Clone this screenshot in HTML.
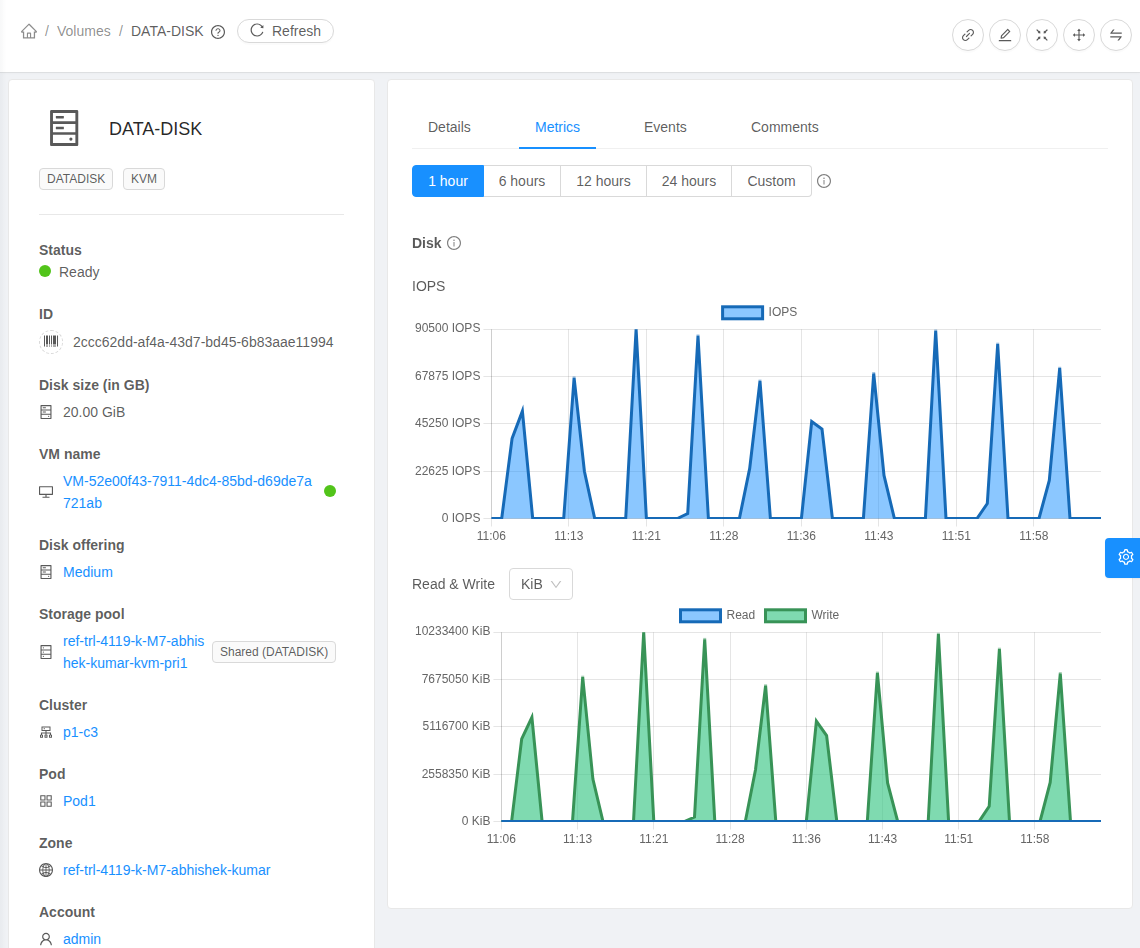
<!DOCTYPE html>
<html lang="en">
<head>
<meta charset="utf-8">
<title>DATA-DISK - Volumes</title>
<style>
*{box-sizing:border-box;}
html,body{margin:0;padding:0;}
body{width:1140px;height:948px;overflow:hidden;background:#f0f2f5;font-family:"Liberation Sans",Arial,Helvetica,sans-serif;font-size:14px;line-height:22px;color:rgba(0,0,0,.65);position:relative;}
a{color:#1890ff;text-decoration:none;}
svg{display:block;}
.abs{position:absolute;}
#hdr{position:absolute;left:0;top:0;width:1140px;height:72px;background:#fff;box-shadow:0 1px 0 rgba(0,0,0,.06),0 1px 3px rgba(0,0,0,.03);}
.bc{position:absolute;top:20px;height:22px;white-space:nowrap;color:rgba(0,0,0,.45);}
#refresh{position:absolute;left:237px;top:19px;width:97px;height:24px;border:1px solid #d9d9d9;border-radius:12px;background:#fff;color:rgba(0,0,0,.65);font-size:14px;line-height:22px;padding:0 0 0 34px;box-shadow:0 2px 0 rgba(0,0,0,.015);}
.cbtn{position:absolute;top:19px;width:32px;height:32px;border:1px solid #d9d9d9;border-radius:50%;background:#fff;box-shadow:0 2px 0 rgba(0,0,0,.015);}
.card{position:absolute;background:#fff;border:1px solid #e8e8e8;border-radius:4px;}
#left{left:8px;top:79px;width:367px;height:900px;}
#right{left:387px;top:79px;width:746px;height:830px;}
.lbl{position:absolute;left:39px;font-weight:bold;color:rgba(0,0,0,.65);white-space:nowrap;}
.val{position:absolute;white-space:nowrap;}
.tag{position:absolute;height:22px;border:1px solid #d9d9d9;border-radius:4px;background:#fafafa;font-size:12px;line-height:20px;padding:0 7px;color:rgba(0,0,0,.65);white-space:nowrap;}
.dot{position:absolute;width:12px;height:12px;border-radius:50%;background:#52c41a;}
.tab{position:absolute;top:116px;white-space:nowrap;}
.rb{position:absolute;top:165px;height:32px;border:1px solid #d9d9d9;border-left-width:0;background:#fff;text-align:center;line-height:30px;white-space:nowrap;}
</style>
</head>
<body>

<div id="hdr">
  <svg class="abs" style="left:20px;top:22px" width="18" height="18" viewBox="0 0 1024 1024" fill="rgba(0,0,0,.45)"><path d="M946.500 505L560.100 118.800l-25.900-25.900a31.500 31.500 0 00-44.400 0L77.500 505a63.900 63.900 0 00-18.800 46c.4 35.200 29.700 63.300 64.900 63.300h42.500V940h691.800V614.300h43.400c17.100 0 33.200-6.700 45.300-18.800a63.600 63.600 0 0018.700-45.300c0-17-6.700-33.100-18.800-45.200zM568 868H456V664h112v204zm217.900-325.700V868H632V640c0-22.100-17.900-40-40-40H432c-22.100 0-40 17.900-40 40v228H238.100V542.300h-96l370-369.700 23.100 23.100L882 542.300h-96.100z"/></svg>
  <span class="bc" style="left:45px">/</span>
  <span class="bc" style="left:57px">Volumes</span>
  <span class="bc" style="left:119px">/</span>
  <span class="bc" style="left:131px;color:rgba(0,0,0,.65)">DATA-DISK</span>
  <svg class="abs" style="left:210px;top:24px" width="16" height="16" viewBox="0 0 1024 1024" fill="rgba(0,0,0,.65)"><path d="M512 64C264.600 64 64 264.600 64 512s200.600 448 448 448 448-200.600 448-448S759.400 64 512 64zm0 820c-205.400 0-372-166.600-372-372s166.600-372 372-372 372 166.600 372 372-166.600 372-372 372zM623.600 316.700C593.600 290.400 554 276 512 276s-81.600 14.500-111.600 40.700C369.200 344 352 380.700 352 420v7.600c0 4.400 3.600 8 8 8h48c4.400 0 8-3.600 8-8V420c0-44.100 43.100-80 96-80s96 35.900 96 80c0 31.100-22 59.600-56.100 72.700-21.200 8.100-39.200 22.300-52.100 40.900-13.100 19-19.900 41.800-19.900 64.900V620c0 4.400 3.600 8 8 8h48c4.400 0 8-3.600 8-8v-22.700a48.300 48.300 0 0130.900-44.800c59-22.700 97.100-74.700 97.100-132.500.1-39.300-17.100-76-48.300-103.300zM472 732a40 40 0 1080 0 40 40 0 10-80 0z"/></svg>
  <div id="refresh">Refresh<svg class="abs" style="left:11px;top:2px" width="16" height="16" viewBox="0 0 1024 1024" fill="rgba(0,0,0,.65)"><path d="M909.100 209.300l-56.400 44.100C775.800 155.100 656.200 92 521.900 92 290 92 102.300 279.500 102 511.500 101.700 743.700 289.800 932 521.900 932c181.300 0 335.800-115 394.600-276.100 1.500-4.200-.7-8.900-4.900-10.300l-56.700-19.500a8 8 0 00-10.100 4.800c-1.800 5-3.800 10-5.900 14.900-17.300 41-42.100 77.800-73.700 109.400A344.770 344.770 0 01655.900 829c-42.300 17.900-87.400 27-133.800 27-46.500 0-91.500-9.100-133.800-27A341.500 341.500 0 01279 755.200a342.160 342.160 0 01-73.700-109.400c-17.900-42.400-27-87.400-27-133.900s9.100-91.500 27-133.900c17.300-41 42.100-77.800 73.700-109.400 31.600-31.600 68.400-56.400 109.300-73.800 42.300-17.900 87.400-27 133.800-27 46.500 0 91.500 9.100 133.800 27a341.500 341.500 0 01109.300 73.800c9.900 9.900 19.200 20.400 27.800 31.400l-60.200 47a8 8 0 003 14.100l175.600 43c5 1.200 9.900-2.600 9.900-7.700l.8-180.900c-.1-6.600-7.800-10.300-13-6.200z"/></svg></div>
  <div class="cbtn" style="left:952px"><svg class="abs" style="left:7px;top:7px" width="16" height="16" viewBox="0 0 1024 1024" fill="rgba(0,0,0,.65)"><path d="M574 665.400a8.030 8.030 0 00-11.300 0L446.500 781.600c-53.800 53.800-144.600 59.500-204 0-59.500-59.500-53.800-150.200 0-204l116.200-116.200c3.100-3.100 3.100-8.200 0-11.300l-39.800-39.800a8.030 8.030 0 00-11.300 0L191.400 526.500c-84.600 84.600-84.600 221.500 0 306s221.500 84.600 306 0l116.200-116.200c3.100-3.100 3.100-8.200 0-11.300L574 665.400zm258.600-474c-84.600-84.600-221.500-84.600-306 0L410.300 307.600a8.030 8.030 0 000 11.300l39.700 39.700c3.100 3.100 8.200 3.100 11.300 0l116.200-116.200c53.800-53.800 144.600-59.500 204 0 59.500 59.500 53.800 150.200 0 204L665.300 562.600a8.030 8.030 0 000 11.300l39.800 39.800c3.100 3.100 8.200 3.100 11.300 0l116.200-116.200c84.500-84.600 84.500-221.500 0-306.100zM610.100 372.300a8.030 8.030 0 00-11.300 0L372.300 598.700a8.030 8.030 0 000 11.300l39.600 39.600c3.100 3.100 8.200 3.100 11.300 0l226.400-226.400c3.100-3.100 3.100-8.200 0-11.300l-39.500-39.600z"/></svg></div>
  <div class="cbtn" style="left:989px"><svg class="abs" style="left:7px;top:7px" width="16" height="16" viewBox="0 0 1024 1024" fill="rgba(0,0,0,.65)"><path d="M257.700 752c2 0 4-.2 6-.5L431.900 722c2-.4 3.900-1.300 5.300-2.800l423.900-423.900a9.960 9.960 0 000-14.100L694.900 114.900c-1.900-1.900-4.400-2.900-7.100-2.900s-5.200 1-7.100 2.900L256.800 538.800c-1.500 1.500-2.400 3.300-2.800 5.300l-29.500 168.200a33.500 33.500 0 009.400 29.800c6.600 6.400 14.900 9.900 23.800 9.900zm67.400-174.400L687.800 215l73.300 73.300-362.700 362.600-88.900 15.700 15.600-89zM880 836H144c-17.700 0-32 14.300-32 32v36c0 4.400 3.600 8 8 8h784c4.400 0 8-3.600 8-8v-36c0-17.700-14.300-32-32-32z"/></svg></div>
  <div class="cbtn" style="left:1026px"><svg class="abs" style="left:7px;top:7px" width="16" height="16" viewBox="0 0 1024 1024" fill="rgba(0,0,0,.65)"><path d="M391 240.900c-.8-6.600-8.900-9.400-13.600-4.700l-43.700 43.700L200 146.300a8.030 8.030 0 00-11.300 0l-42.400 42.300a8.030 8.030 0 000 11.300L280 333.600l-43.900 43.900a8.010 8.010 0 004.700 13.600L401 410c5.100.6 9.500-3.700 8.900-8.900L391 240.900zm10.100 373.200L240.800 633c-6.600.8-9.400 8.900-4.700 13.600l43.900 43.900L146.300 824a8.030 8.030 0 000 11.300l42.400 42.300c3.100 3.100 8.200 3.100 11.300 0L333.700 744l43.700 43.700A8.010 8.010 0 00391 783l18.900-160.100c.6-5.100-3.700-9.400-8.800-8.800zm221.800-204.200L783.200 391c6.600-.8 9.400-8.900 4.700-13.600L744 333.600 877.700 200c3.100-3.100 3.100-8.200 0-11.300l-42.400-42.300a8.030 8.030 0 00-11.300 0L690.300 279.900l-43.700-43.700a8.010 8.010 0 00-13.600 4.700L614.100 401c-.6 5.200 3.700 9.500 8.800 8.900zM744 690.400l43.900-43.900a8.010 8.010 0 00-4.700-13.600L623 614c-5.100-.6-9.500 3.700-8.900 8.900L633 783.100c.8 6.600 8.900 9.400 13.600 4.700l43.700-43.700L824 877.700c3.100 3.100 8.200 3.100 11.300 0l42.400-42.300c3.100-3.100 3.100-8.200 0-11.300L744 690.400z"/></svg></div>
  <div class="cbtn" style="left:1063px"><svg class="abs" style="left:7px;top:7px" width="16" height="16" viewBox="0 0 1024 1024" fill="rgba(0,0,0,.65)"><path d="M909.300 506.300L781.700 405.600a7.230 7.230 0 00-11.700 5.700V476H548V254h64.800c6 0 9.400-7 5.700-11.700L517.700 114.700a7.140 7.140 0 00-11.300 0L405.600 242.300a7.230 7.230 0 005.700 11.700H476v222H254v-64.800c0-6-7-9.400-11.700-5.700L114.700 506.300a7.140 7.140 0 000 11.300l127.500 100.800c4.700 3.700 11.700.4 11.700-5.700V548h222v222h-64.800c-6 0-9.400 7-5.700 11.700l100.800 127.500c2.900 3.700 8.500 3.700 11.300 0l100.800-127.500c3.700-4.700.4-11.700-5.700-11.700H548V548h222v64.800c0 6 7 9.400 11.700 5.700l127.500-100.800a7.300 7.300 0 00.100-11.400z"/></svg></div>
  <div class="cbtn" style="left:1100px"><svg class="abs" style="left:7px;top:7px" width="16" height="16" viewBox="0 0 1024 1024" fill="rgba(0,0,0,.65)"><path d="M847.900 592H152c-4.400 0-8 3.600-8 8v60c0 4.400 3.600 8 8 8h605.200L612.900 851c-4.100 5.200-.4 13 6.300 13h72.500c4.900 0 9.500-2.200 12.600-6.100l168.800-214.100c16.500-21 1.600-51.800-25.200-51.800zM872 356H266.800l144.300-183c4.100-5.200.4-13-6.300-13h-72.500c-4.900 0-9.500 2.200-12.600 6.100L150.900 380.200c-16.500 21-1.600 51.800 25.100 51.800h696c4.400 0 8-3.600 8-8v-60c0-4.400-3.600-8-8-8z"/></svg></div>
</div>


<div class="card" id="left"></div>
<div id="leftc">
  <svg class="abs" style="left:43px;top:107px;transform:translate(.67px,.55px)" width="41" height="41" viewBox="0 0 1024 1024" fill="#595959"><path d="M832 64H192c-17.700 0-32 14.300-32 32v832c0 17.700 14.300 32 32 32h640c17.700 0 32-14.300 32-32V96c0-17.700-14.300-32-32-32zm-600 72h560v208H232V136zm560 480H232V408h560v208zm0 272H232V680h560v208zM496 208H312c-4.400 0-8 3.600-8 8v48c0 4.400 3.600 8 8 8h184c4.400 0 8-3.600 8-8v-48c0-4.400-3.600-8-8-8zM312 544h184c4.400 0 8-3.600 8-8v-48c0-4.400-3.600-8-8-8H312c-4.400 0-8 3.600-8 8v48c0 4.400 3.600 8 8 8zm328 244a40 40 0 1080 0 40 40 0 10-80 0z"/></svg>
  <div class="abs" style="left:109px;top:115px;font-size:18px;line-height:28px;color:rgba(0,0,0,.85);white-space:nowrap;">DATA-DISK</div>
  <div class="tag" style="left:39px;top:168px;">DATADISK</div>
  <div class="tag" style="left:123px;top:168px;">KVM</div>
  <div class="abs" style="left:39px;top:214px;width:305px;height:1px;background:#e8e8e8;"></div>

  <div class="lbl" style="top:239px">Status</div>
  <div class="dot" style="left:39px;top:265px"></div>
  <div class="val" style="left:59px;top:261px">Ready</div>

  <div class="lbl" style="top:303px">ID</div>
  <div class="abs" style="left:39px;top:330px;width:24px;height:24px;border:1px dashed #d9d9d9;border-radius:50%;"></div>
  <svg class="abs" style="left:43px;top:333px" width="16" height="16" viewBox="0 0 1024 1024" fill="rgba(0,0,0,.65)"><path d="M120 160H72c-4.400 0-8 3.600-8 8v688c0 4.400 3.600 8 8 8h48c4.400 0 8-3.600 8-8V168c0-4.400-3.600-8-8-8zm833 0h-48c-4.400 0-8 3.600-8 8v688c0 4.400 3.600 8 8 8h48c4.400 0 8-3.600 8-8V168c0-4.400-3.600-8-8-8zM200 736h112c4.400 0 8-3.600 8-8V168c0-4.400-3.600-8-8-8H200c-4.400 0-8 3.600-8 8v560c0 4.400 3.600 8 8 8zm321 0h48c4.400 0 8-3.600 8-8V168c0-4.400-3.600-8-8-8h-48c-4.400 0-8 3.600-8 8v560c0 4.400 3.600 8 8 8zm126 0h178c4.400 0 8-3.600 8-8V168c0-4.400-3.600-8-8-8H647c-4.400 0-8 3.600-8 8v560c0 4.400 3.600 8 8 8zm-255 0h48c4.400 0 8-3.600 8-8V168c0-4.400-3.600-8-8-8h-48c-4.400 0-8 3.600-8 8v560c0 4.400 3.600 8 8 8zm-79 64H201c-4.400 0-8 3.600-8 8v48c0 4.400 3.600 8 8 8h112c4.400 0 8-3.600 8-8v-48c0-4.400-3.600-8-8-8zm257 0h-48c-4.400 0-8 3.600-8 8v48c0 4.400 3.600 8 8 8h48c4.400 0 8-3.600 8-8v-48c0-4.400-3.600-8-8-8zm256 0H648c-4.400 0-8 3.600-8 8v48c0 4.400 3.600 8 8 8h178c4.400 0 8-3.600 8-8v-48c0-4.400-3.600-8-8-8zm-385 0h-48c-4.400 0-8 3.600-8 8v48c0 4.400 3.600 8 8 8h48c4.400 0 8-3.600 8-8v-48c0-4.400-3.600-8-8-8z"/></svg>
  <div class="val" style="left:73px;top:331px">2ccc62dd-af4a-43d7-bd45-6b83aae11994</div>

  <div class="lbl" style="top:374px">Disk size (in GB)</div>
  <svg class="abs" style="left:38px;top:404px" width="16" height="16" viewBox="0 0 1024 1024" fill="rgba(0,0,0,.65)"><path d="M832 64H192c-17.700 0-32 14.300-32 32v832c0 17.700 14.300 32 32 32h640c17.700 0 32-14.300 32-32V96c0-17.700-14.300-32-32-32zm-600 72h560v208H232V136zm560 480H232V408h560v208zm0 272H232V680h560v208zM496 208H312c-4.400 0-8 3.600-8 8v48c0 4.400 3.600 8 8 8h184c4.400 0 8-3.600 8-8v-48c0-4.400-3.600-8-8-8zM312 544h184c4.400 0 8-3.600 8-8v-48c0-4.400-3.600-8-8-8H312c-4.400 0-8 3.600-8 8v48c0 4.400 3.600 8 8 8zm328 244a40 40 0 1080 0 40 40 0 10-80 0z"/></svg>
  <div class="val" style="left:63px;top:401px">20.00 GiB</div>

  <div class="lbl" style="top:443px">VM name</div>
  <svg class="abs" style="left:38px;top:484px" width="16" height="16" viewBox="0 0 1024 1024" fill="rgba(0,0,0,.65)"><path d="M928 140H96c-17.700 0-32 14.300-32 32v496c0 17.700 14.300 32 32 32h380v112H304c-8.800 0-16 7.200-16 16v48c0 4.400 3.600 8 8 8h432c4.400 0 8-3.600 8-8v-48c0-8.800-7.200-16-16-16H548V700h380c17.700 0 32-14.300 32-32V172c0-17.700-14.300-32-32-32zm-40 488H136V212h752v416z"/></svg>
  <div class="val" style="left:63px;top:470px"><a>VM-52e00f43-7911-4dc4-85bd-d69de7a<br>721ab</a></div>
  <div class="dot" style="left:324px;top:485px"></div>

  <div class="lbl" style="top:534px">Disk offering</div>
  <svg class="abs" style="left:38px;top:564px" width="16" height="16" viewBox="0 0 1024 1024" fill="rgba(0,0,0,.65)"><path d="M832 64H192c-17.700 0-32 14.300-32 32v832c0 17.700 14.300 32 32 32h640c17.700 0 32-14.300 32-32V96c0-17.700-14.300-32-32-32zm-600 72h560v208H232V136zm560 480H232V408h560v208zm0 272H232V680h560v208zM496 208H312c-4.400 0-8 3.600-8 8v48c0 4.400 3.600 8 8 8h184c4.400 0 8-3.600 8-8v-48c0-4.400-3.600-8-8-8zM312 544h184c4.400 0 8-3.600 8-8v-48c0-4.400-3.600-8-8-8H312c-4.400 0-8 3.600-8 8v48c0 4.400 3.600 8 8 8zm328 244a40 40 0 1080 0 40 40 0 10-80 0z"/></svg>
  <div class="val" style="left:63px;top:561px"><a>Medium</a></div>

  <div class="lbl" style="top:603px">Storage pool</div>
  <svg class="abs" style="left:38px;top:644px" width="16" height="16" viewBox="0 0 1024 1024" fill="rgba(0,0,0,.65)"><path d="M832 64H192c-17.700 0-32 14.300-32 32v832c0 17.700 14.300 32 32 32h640c17.700 0 32-14.300 32-32V96c0-17.700-14.300-32-32-32zm-600 72h560v208H232V136zm560 480H232V408h560v208zm0 272H232V680h560v208zM304 240a40 40 0 1080 0 40 40 0 10-80 0zm0 272a40 40 0 1080 0 40 40 0 10-80 0zm0 272a40 40 0 1080 0 40 40 0 10-80 0z"/></svg>
  <div class="val" style="left:63px;top:630px"><a>ref-trl-4119-k-M7-abhis<br>hek-kumar-kvm-pri1</a></div>
  <div class="tag" style="left:212px;top:641px;">Shared (DATADISK)</div>

  <div class="lbl" style="top:694px">Cluster</div>
  <svg class="abs" style="left:38px;top:724px" width="16" height="16" viewBox="0 0 1024 1024" fill="rgba(0,0,0,.65)"><path d="M888 680h-54V540H546v-92h238c8.800 0 16-7.200 16-16V168c0-8.800-7.200-16-16-16H240c-8.800 0-16 7.200-16 16v264c0 8.800 7.200 16 16 16h238v92H190v140h-54c-4.400 0-8 3.600-8 8v176c0 4.400 3.600 8 8 8h176c4.400 0 8-3.600 8-8V688c0-4.400-3.600-8-8-8h-54v-72h220v72h-54c-4.400 0-8 3.600-8 8v176c0 4.400 3.600 8 8 8h176c4.400 0 8-3.600 8-8V688c0-4.400-3.600-8-8-8h-54v-72h220v72h-54c-4.400 0-8 3.600-8 8v176c0 4.400 3.600 8 8 8h176c4.400 0 8-3.600 8-8V688c0-4.400-3.600-8-8-8zM256 805.300c0 1.500-1.200 2.700-2.700 2.700h-58.700c-1.500 0-2.700-1.200-2.700-2.700v-58.700c0-1.500 1.200-2.700 2.700-2.700h58.700c1.500 0 2.700 1.200 2.700 2.700v58.700zm288 0c0 1.500-1.200 2.700-2.700 2.700h-58.700c-1.500 0-2.700-1.200-2.700-2.700v-58.700c0-1.500 1.200-2.700 2.700-2.700h58.700c1.500 0 2.700 1.200 2.700 2.700v58.700zM288 384V216h448v168H288zm544 421.300c0 1.500-1.200 2.700-2.700 2.700h-58.700c-1.500 0-2.700-1.200-2.700-2.700v-58.700c0-1.500 1.200-2.700 2.700-2.700h58.700c1.500 0 2.700 1.200 2.700 2.700v58.700zM360 300a40 40 0 1080 0 40 40 0 10-80 0z"/></svg>
  <div class="val" style="left:63px;top:721px"><a>p1-c3</a></div>

  <div class="lbl" style="top:763px">Pod</div>
  <svg class="abs" style="left:38px;top:793px" width="16" height="16" viewBox="0 0 1024 1024" fill="rgba(0,0,0,.65)"><path d="M464 144H160c-8.800 0-16 7.200-16 16v304c0 8.800 7.200 16 16 16h304c8.800 0 16-7.200 16-16V160c0-8.800-7.200-16-16-16zm-52 268H212V212h200v200zm452-268H560c-8.800 0-16 7.200-16 16v304c0 8.800 7.200 16 16 16h304c8.800 0 16-7.200 16-16V160c0-8.800-7.200-16-16-16zm-52 268H612V212h200v200zM464 544H160c-8.800 0-16 7.200-16 16v304c0 8.800 7.200 16 16 16h304c8.800 0 16-7.200 16-16V560c0-8.800-7.200-16-16-16zm-52 268H212V612h200v200zm452-268H560c-8.800 0-16 7.200-16 16v304c0 8.800 7.200 16 16 16h304c8.800 0 16-7.200 16-16V560c0-8.800-7.200-16-16-16zm-52 268H612V612h200v200z"/></svg>
  <div class="val" style="left:63px;top:790px"><a>Pod1</a></div>

  <div class="lbl" style="top:832px">Zone</div>
  <svg class="abs" style="left:38px;top:862px" width="16" height="16" viewBox="0 0 1024 1024" fill="rgba(0,0,0,.65)"><path d="M854.400 800.900c.2-.3.500-.6.700-.9C920.600 722.100 960 621.700 960 512s-39.400-210.100-104.800-288c-.2-.3-.5-.5-.7-.8-1.100-1.300-2.100-2.500-3.200-3.700-.4-.5-.8-.9-1.200-1.400l-4.100-4.700-.1-.1c-1.500-1.700-3.100-3.400-4.600-5.100l-.1-.1c-3.200-3.400-6.400-6.800-9.700-10.100l-.1-.1-4.800-4.800-.3-.3c-1.500-1.500-3-2.900-4.500-4.300-.5-.5-1-1-1.600-1.500-1-1-2-1.900-3-2.800-.3-.3-.7-.6-1-1C736.400 109.200 629.500 64 512 64s-224.400 45.200-304.300 119.200c-.3.300-.7.600-1 1-1 .9-2 1.900-3 2.900-.5.500-1 1-1.600 1.500-1.500 1.400-3 2.900-4.500 4.300l-.3.300-4.800 4.800-.1.100c-3.300 3.300-6.500 6.700-9.700 10.100l-.1.100c-1.600 1.700-3.100 3.400-4.600 5.100l-.1.100c-1.400 1.500-2.800 3.100-4.100 4.700-.4.500-.8.900-1.200 1.400-1.100 1.200-2.100 2.500-3.200 3.700-.2.300-.5.500-.7.800C103.400 301.900 64 402.300 64 512s39.400 210.100 104.800 288c.2.300.5.600.7.900l3.100 3.700c.4.500.8.900 1.200 1.400l4.100 4.700c0 .1.100.1.100.2 1.500 1.700 3 3.400 4.600 5l.1.100c3.200 3.400 6.400 6.800 9.600 10.100l.1.100c1.600 1.600 3.100 3.200 4.700 4.700l.3.300c3.300 3.300 6.700 6.500 10.100 9.600 80.100 74 187 119.200 304.500 119.200s224.400-45.200 304.300-119.200a300 300 0 0010-9.600l.3-.3c1.600-1.600 3.200-3.100 4.700-4.700l.1-.1c3.300-3.300 6.500-6.700 9.600-10.100l.1-.1c1.500-1.700 3.100-3.300 4.600-5 0-.1.100-.1.100-.2 1.400-1.500 2.800-3.100 4.100-4.700.4-.5.800-.9 1.200-1.400a99 99 0 003.300-3.700zm4.100-142.600c-13.800 32.600-32 62.800-54.200 90.200a444.070 444.070 0 00-81.500-55.900c11.600-46.900 18.800-98.400 20.700-152.600H887c-3 40.900-12.600 80.600-28.500 118.300zM887 484H743.500c-1.900-54.200-9.100-105.700-20.700-152.600 29.300-15.600 56.600-34.400 81.500-55.900A373.860 373.860 0 01887 484zM658.300 165.500c39.700 16.800 75.800 40 107.600 69.200a394.720 394.720 0 01-59.400 41.800c-15.700-45-35.800-84.100-59.200-115.400 3.700 1.400 7.400 2.900 11 4.400zm-90.600 700.600c-9.200 7.200-18.400 12.700-27.700 16.400V697a389.100 389.100 0 01115.700 26.200c-8.300 24.600-17.900 47.300-29 67.800-17.400 32.400-37.800 58.300-59 75.100zm59-633.100c11 20.600 20.700 43.300 29 67.800A389.100 389.100 0 01540 327V141.600c9.200 3.700 18.500 9.100 27.700 16.400 21.200 16.700 41.600 42.600 59 75zM540 640.900V540h147.500c-1.600 44.200-7.100 87.100-16.300 127.800l-.3 1.200A445.020 445.020 0 00540 640.900zm0-156.900V383.100c45.800-2.800 89.800-12.500 130.900-28.100l.3 1.200c9.200 40.700 14.700 83.500 16.300 127.800H540zm-56 56v100.900c-45.800 2.800-89.800 12.500-130.900 28.100l-.3-1.200c-9.200-40.700-14.700-83.500-16.300-127.800H484zm-147.500-56c1.600-44.200 7.100-87.100 16.300-127.800l.3-1.200c41.100 15.600 85 25.300 130.900 28.100V484H336.500zM484 697v185.400c-9.200-3.700-18.500-9.100-27.700-16.400-21.200-16.700-41.700-42.700-59.100-75.100-11-20.600-20.700-43.300-29-67.800 37.200-14.600 75.900-23.300 115.800-26.100zm0-370a389.100 389.100 0 01-115.700-26.200c8.300-24.600 17.900-47.300 29-67.800 17.400-32.400 37.800-58.400 59.100-75.100 9.200-7.200 18.400-12.700 27.700-16.400V327zM365.700 165.500c3.700-1.500 7.300-3 11-4.400-23.400 31.300-43.500 70.400-59.200 115.400-21-12-40.900-26-59.400-41.800 31.800-29.200 67.900-52.400 107.600-69.200zM165.500 365.700c13.800-32.600 32-62.800 54.200-90.200 24.900 21.500 52.200 40.300 81.500 55.900-11.600 46.900-18.800 98.400-20.700 152.600H137c3-40.900 12.600-80.600 28.500-118.300zM137 540h143.500c1.900 54.200 9.100 105.700 20.700 152.600a444.070 444.070 0 00-81.500 55.900A373.860 373.860 0 01137 540zm228.700 318.500c-39.700-16.800-75.800-40-107.600-69.200 18.500-15.800 38.400-29.700 59.400-41.800 15.700 45 35.800 84.100 59.200 115.400-3.700-1.400-7.400-2.900-11-4.400zm292.600 0c-3.700 1.500-7.300 3-11 4.400 23.400-31.300 43.500-70.400 59.200-115.400 21 12 40.900 26 59.400 41.800a373.810 373.810 0 01-107.600 69.200z"/></svg>
  <div class="val" style="left:63px;top:859px"><a>ref-trl-4119-k-M7-abhishek-kumar</a></div>

  <div class="lbl" style="top:901px">Account</div>
  <svg class="abs" style="left:38px;top:931px" width="16" height="16" viewBox="0 0 1024 1024" fill="rgba(0,0,0,.65)"><path d="M858.500 763.600a374 374 0 00-80.600-119.500 375.630 375.630 0 00-119.500-80.600c-.4-.2-.8-.3-1.200-.5C719.500 518 760 444.700 760 362c0-137-111-248-248-248S264 225 264 362c0 82.700 40.500 156 102.800 201.100-.4.200-.8.300-1.200.5-44.800 18.900-85 46-119.500 80.600a375.630 375.630 0 00-80.600 119.500A371.700 371.700 0 00136 901.800a8 8 0 008 8.200h60c4.400 0 7.900-3.500 8-7.800 2-77.200 33-149.500 87.800-204.300 56.700-56.700 132-87.900 212.200-87.900s155.500 31.200 212.200 87.900C779 752.700 810 825 812 902.200c.1 4.400 3.600 7.800 8 7.800h60a8 8 0 008-8.200c-1-47.800-10.900-94.300-29.500-138.200zM512 534c-45.900 0-89.100-17.900-121.600-50.400S340 407.900 340 362c0-45.900 17.900-89.100 50.400-121.600S466.100 190 512 190s89.100 17.900 121.600 50.400S684 316.100 684 362c0 45.900-17.900 89.100-50.400 121.600S557.900 534 512 534z"/></svg>
  <div class="val" style="left:63px;top:928px"><a>admin</a></div>
</div>


<div class="card" id="right"></div>
<div id="rightc">
  <div class="tab" style="left:428px">Details</div>
  <div class="tab" style="left:535px;color:#1890ff">Metrics</div>
  <div class="tab" style="left:644px">Events</div>
  <div class="tab" style="left:751px">Comments</div>
  <div class="abs" style="left:412px;top:148px;width:696px;height:1px;background:#f0f0f0;"></div>
  <div class="abs" style="left:519px;top:147px;width:77px;height:2px;background:#1890ff;"></div>

  <div class="rb" style="left:412px;width:72px;background:#1890ff;border-color:#1890ff;border-left-width:1px;color:#fff;border-radius:4px 0 0 4px;">1 hour</div>
  <div class="rb" style="left:484px;width:77px;">6 hours</div>
  <div class="rb" style="left:561px;width:86px;">12 hours</div>
  <div class="rb" style="left:647px;width:85px;">24 hours</div>
  <div class="rb" style="left:732px;width:80px;border-radius:0 4px 4px 0;">Custom</div>
  <svg class="abs" style="left:816px;top:173px" width="16" height="16" viewBox="0 0 1024 1024" fill="rgba(0,0,0,.5)"><path d="M512 64C264.600 64 64 264.600 64 512s200.600 448 448 448 448-200.600 448-448S759.400 64 512 64zm0 820c-205.400 0-372-166.600-372-372s166.600-372 372-372 372 166.600 372 372-166.600 372-372 372zM464 336a48 48 0 1096 0 48 48 0 10-96 0zm72 112h-48c-4.400 0-8 3.600-8 8v272c0 4.400 3.600 8 8 8h48c4.400 0 8-3.600 8-8V456c0-4.400-3.600-8-8-8z"/></svg>

  <div class="abs" style="left:0;top:0;width:1140px;height:948px;will-change:transform">
  <div class="abs" style="left:412px;top:232px;font-weight:bold;">Disk</div>
  <svg class="abs" style="left:446px;top:235px" width="16" height="16" viewBox="0 0 1024 1024" fill="rgba(0,0,0,.5)"><path d="M512 64C264.600 64 64 264.600 64 512s200.600 448 448 448 448-200.600 448-448S759.400 64 512 64zm0 820c-205.400 0-372-166.600-372-372s166.600-372 372-372 372 166.600 372 372-166.600 372-372 372zM464 336a48 48 0 1096 0 48 48 0 10-96 0zm72 112h-48c-4.400 0-8 3.600-8 8v272c0 4.400 3.600 8 8 8h48c4.400 0 8-3.600 8-8V456c0-4.400-3.600-8-8-8z"/></svg>
  <div class="abs" style="left:412px;top:275px;">IOPS</div>
  <div class="abs" style="left:412px;top:573px;">Read &amp; Write</div>
  <div class="abs" style="left:509px;top:568px;width:64px;height:32px;border:1px solid #d9d9d9;border-radius:4px;background:#fff;line-height:30px;padding-left:11px;">KiB<svg class="abs" style="left:39px;top:8px;transform:translate(0px,0.5px)" width="14" height="14" viewBox="0 0 1024 1024" fill="rgba(0,0,0,.25)"><path d="M884 256h-75c-5.100 0-9.900 2.500-12.900 6.600L512 654.200 227.900 262.600c-3-4.100-7.800-6.600-12.900-6.600h-75c-6.500 0-10.300 7.400-6.500 12.700l352.600 486.100c12.800 17.600 39 17.600 51.700 0l352.600-486.100c3.900-5.300.1-12.700-6.400-12.700z"/></svg></div>
<svg class="abs" style="left:0;top:0" width="1140" height="948" viewBox="0 0 1140 948" font-family="Liberation Sans, Arial, sans-serif" font-size="12" fill="#666">
<path d="M483.4 329.5H1101M483.4 376.5H1101M483.4 423.5H1101M483.4 471.5H1101M483.4 518.5H1101M491.5 329.3V526.5M568.5 329.3V526.5M646.5 329.3V526.5M723.5 329.3V526.5M801.5 329.3V526.5M878.5 329.3V526.5M956.5 329.3V526.5M1033.5 329.3V526.5M491.5 329.3V518.5M491.4 518.5H1101" stroke="rgba(0,0,0,.1)" stroke-width="1" fill="none"/>
<text x="480.4" y="332" text-anchor="end">90500 IOPS</text>
<text x="480.4" y="380" text-anchor="end">67875 IOPS</text>
<text x="480.4" y="427" text-anchor="end">45250 IOPS</text>
<text x="480.4" y="475" text-anchor="end">22625 IOPS</text>
<text x="480.4" y="522" text-anchor="end">0 IOPS</text>
<text x="491.4" y="540" text-anchor="middle">11:06</text>
<text x="568.9" y="540" text-anchor="middle">11:13</text>
<text x="646.4" y="540" text-anchor="middle">11:21</text>
<text x="723.9" y="540" text-anchor="middle">11:28</text>
<text x="801.4" y="540" text-anchor="middle">11:36</text>
<text x="878.9" y="540" text-anchor="middle">11:43</text>
<text x="956.3" y="540" text-anchor="middle">11:51</text>
<text x="1033.8" y="540" text-anchor="middle">11:58</text>
<clipPath id="c1"><rect x="489" y="329" width="613" height="190"/></clipPath>
<g clip-path="url(#c1)"><path d="M491.4 518.5L501.7 518.5L512.1 438.4L522.4 411.1L532.7 518.5L543.1 518.5L553.4 518.5L563.7 518.5L574.1 377.8L584.4 471.2L594.7 518.5L605.1 518.5L615.4 518.5L625.7 518.5L636.1 329.4L646.4 518.5L656.7 518.5L667.0 518.5L677.4 518.5L687.7 513.5L698.0 335.9L708.4 518.5L718.7 518.5L729.0 518.5L739.4 518.5L749.7 468.4L760.0 381.0L770.4 518.5L780.7 518.5L791.0 518.5L801.4 518.5L811.7 421.5L822.0 429.1L832.4 518.5L842.7 518.5L853.0 518.5L863.4 518.5L873.7 373.5L884.0 475.4L894.4 518.5L904.7 518.5L915.0 518.5L925.4 518.5L935.7 330.9L946.0 518.5L956.3 518.5L966.7 518.5L977.0 518.5L987.3 503.5L997.7 344.1L1008.0 518.5L1018.3 518.5L1028.7 518.5L1039.0 518.5L1049.3 480.5L1059.7 368.2L1070.0 518.5L1080.3 518.5L1090.7 518.5L1101.0 518.5L1101 518.5L491.4 518.5Z" fill="rgba(24,144,255,.5)" stroke="none"/><path d="M491.4 518.5L501.7 518.5L512.1 438.4L522.4 411.1L532.7 518.5L543.1 518.5L553.4 518.5L563.7 518.5L574.1 377.8L584.4 471.2L594.7 518.5L605.1 518.5L615.4 518.5L625.7 518.5L636.1 329.4L646.4 518.5L656.7 518.5L667.0 518.5L677.4 518.5L687.7 513.5L698.0 335.9L708.4 518.5L718.7 518.5L729.0 518.5L739.4 518.5L749.7 468.4L760.0 381.0L770.4 518.5L780.7 518.5L791.0 518.5L801.4 518.5L811.7 421.5L822.0 429.1L832.4 518.5L842.7 518.5L853.0 518.5L863.4 518.5L873.7 373.5L884.0 475.4L894.4 518.5L904.7 518.5L915.0 518.5L925.4 518.5L935.7 330.9L946.0 518.5L956.3 518.5L966.7 518.5L977.0 518.5L987.3 503.5L997.7 344.1L1008.0 518.5L1018.3 518.5L1028.7 518.5L1039.0 518.5L1049.3 480.5L1059.7 368.2L1070.0 518.5L1080.3 518.5L1090.7 518.5L1101.0 518.5" fill="none" stroke="#166ab7" stroke-width="3" stroke-linejoin="miter" stroke-miterlimit="10"/><rect x="572.6" y="376.4" width="3" height="1.4" fill="#166ab7" opacity=".45"/><rect x="634.6" y="328.0" width="3" height="1.4" fill="#166ab7" opacity=".45"/><rect x="696.5" y="334.5" width="3" height="1.4" fill="#166ab7" opacity=".45"/><rect x="758.5" y="379.6" width="3" height="1.4" fill="#166ab7" opacity=".45"/><rect x="872.2" y="372.1" width="3" height="1.4" fill="#166ab7" opacity=".45"/><rect x="934.2" y="329.5" width="3" height="1.4" fill="#166ab7" opacity=".45"/><rect x="996.2" y="342.7" width="3" height="1.4" fill="#166ab7" opacity=".45"/><rect x="1058.2" y="366.8" width="3" height="1.4" fill="#166ab7" opacity=".45"/></g>
<rect x="722.600" y="306.800" width="40" height="12" fill="rgba(24,144,255,.5)" stroke="#166ab7" stroke-width="3"/>
<text x="768.600" y="315.800">IOPS</text>
<path d="M493.4 632.5H1101M493.4 679.5H1101M493.4 726.5H1101M493.4 774.5H1101M493.4 821.5H1101M501.5 632.3V829.5M577.5 632.3V829.5M653.5 632.3V829.5M730.5 632.3V829.5M806.5 632.3V829.5M882.5 632.3V829.5M958.5 632.3V829.5M1034.5 632.3V829.5M501.5 632.3V821.5M501.4 821.5H1101" stroke="rgba(0,0,0,.1)" stroke-width="1" fill="none"/>
<text x="490.4" y="635" text-anchor="end">10233400 KiB</text>
<text x="490.4" y="683" text-anchor="end">7675050 KiB</text>
<text x="490.4" y="730" text-anchor="end">5116700 KiB</text>
<text x="490.4" y="778" text-anchor="end">2558350 KiB</text>
<text x="490.4" y="825" text-anchor="end">0 KiB</text>
<text x="501.4" y="843" text-anchor="middle">11:06</text>
<text x="577.6" y="843" text-anchor="middle">11:13</text>
<text x="653.8" y="843" text-anchor="middle">11:21</text>
<text x="730.1" y="843" text-anchor="middle">11:28</text>
<text x="806.3" y="843" text-anchor="middle">11:36</text>
<text x="882.5" y="843" text-anchor="middle">11:43</text>
<text x="958.7" y="843" text-anchor="middle">11:51</text>
<text x="1034.9" y="843" text-anchor="middle">11:58</text>
<clipPath id="c2"><rect x="499" y="632" width="603" height="190"/></clipPath>
<g clip-path="url(#c2)"><path d="M501.4 821.5L511.6 821.5L521.7 738.9L531.9 717.4L542.1 821.5L552.2 821.5L562.4 821.5L572.5 821.5L582.7 677.1L592.9 779.1L603.0 821.5L613.2 821.5L623.4 821.5L633.5 821.5L643.7 632.4L653.8 821.5L664.0 821.5L674.2 821.5L684.3 821.5L694.5 817.0L704.7 639.3L714.8 821.5L725.0 821.5L735.1 821.5L745.3 821.5L755.5 769.8L765.6 685.7L775.8 821.5L786.0 821.5L796.1 821.5L806.3 821.5L816.4 721.1L826.6 735.6L836.8 821.5L846.9 821.5L857.1 821.5L867.3 821.5L877.4 673.0L887.6 783.0L897.7 821.5L907.9 821.5L918.1 821.5L928.2 821.5L938.4 634.2L948.6 821.5L958.7 821.5L968.9 821.5L979.0 821.5L989.2 806.3L999.4 649.1L1009.5 821.5L1019.7 821.5L1029.9 821.5L1040.0 821.5L1050.2 782.5L1060.3 673.5L1070.5 821.5L1080.7 821.5L1090.8 821.5L1101.0 821.5L1101 821.5L501.4 821.5Z" fill="rgba(59,198,133,.65)" stroke="none"/><path d="M501.4 821.5L511.6 821.5L521.7 738.9L531.9 717.4L542.1 821.5L552.2 821.5L562.4 821.5L572.5 821.5L582.7 677.1L592.9 779.1L603.0 821.5L613.2 821.5L623.4 821.5L633.5 821.5L643.7 632.4L653.8 821.5L664.0 821.5L674.2 821.5L684.3 821.5L694.5 817.0L704.7 639.3L714.8 821.5L725.0 821.5L735.1 821.5L745.3 821.5L755.5 769.8L765.6 685.7L775.8 821.5L786.0 821.5L796.1 821.5L806.3 821.5L816.4 721.1L826.6 735.6L836.8 821.5L846.9 821.5L857.1 821.5L867.3 821.5L877.4 673.0L887.6 783.0L897.7 821.5L907.9 821.5L918.1 821.5L928.2 821.5L938.4 634.2L948.6 821.5L958.7 821.5L968.9 821.5L979.0 821.5L989.2 806.3L999.4 649.1L1009.5 821.5L1019.7 821.5L1029.9 821.5L1040.0 821.5L1050.2 782.5L1060.3 673.5L1070.5 821.5L1080.7 821.5L1090.8 821.5L1101.0 821.5" fill="none" stroke="#389357" stroke-width="3" stroke-linejoin="miter" stroke-miterlimit="10"/><rect x="581.2" y="675.7" width="3" height="1.4" fill="#389357" opacity=".45"/><rect x="642.2" y="631.0" width="3" height="1.4" fill="#389357" opacity=".45"/><rect x="703.2" y="637.9" width="3" height="1.4" fill="#389357" opacity=".45"/><rect x="764.1" y="684.3" width="3" height="1.4" fill="#389357" opacity=".45"/><rect x="875.9" y="671.6" width="3" height="1.4" fill="#389357" opacity=".45"/><rect x="936.9" y="632.8" width="3" height="1.4" fill="#389357" opacity=".45"/><rect x="997.9" y="647.7" width="3" height="1.4" fill="#389357" opacity=".45"/><rect x="1058.8" y="672.1" width="3" height="1.4" fill="#389357" opacity=".45"/><path d="M501.4 821.5H1101" stroke="#166ab7" stroke-width="3"/></g>
<rect x="680.5" y="609.800" width="40" height="12" fill="rgba(24,144,255,.5)" stroke="#166ab7" stroke-width="3"/>
<text x="726.5" y="618.800">Read</text>
<rect x="765.5" y="609.800" width="40" height="12" fill="rgba(59,198,133,.65)" stroke="#389357" stroke-width="3"/>
<text x="811.5" y="618.800">Write</text>
</svg>
  </div>
</div>


<div class="abs" style="left:1105px;top:538px;width:35px;height:40px;background:#1890ff;border-radius:4px 0 0 4px;box-shadow:0 1px 2px rgba(0,0,0,.05);"><svg class="abs" style="left:12px;top:10px" width="18" height="18" viewBox="0 0 1024 1024" fill="#fff"><path d="M924.800 625.700l-65.500-56c3.100-19 4.700-38.400 4.700-57.800s-1.600-38.800-4.700-57.800l65.500-56a32.030 32.030 0 009.300-35.200l-.9-2.600a442.090 442.090 0 00-79.700-137.900l-1.800-2.100a32.120 32.120 0 00-35.100-9.500l-81.300 28.900c-30-24.600-63.500-44-99.700-57.600l-15.700-85a32.050 32.050 0 00-25.800-25.700l-2.700-.5c-52.100-9.400-106.900-9.400-159 0l-2.700.5a32.050 32.050 0 00-25.800 25.700l-15.800 85.400a351.860 351.860 0 00-99 57.400l-81.900-29.100a32 32 0 00-35.100 9.500l-1.800 2.100a446.020 446.020 0 00-79.700 137.900l-.9 2.600c-4.500 12.500-.8 26.500 9.300 35.200l66.300 56.600c-3.100 18.800-4.600 38-4.600 57.100 0 19.200 1.500 38.400 4.600 57.100L99 625.500a32.030 32.030 0 00-9.300 35.200l.9 2.600c18.100 50.400 44.900 96.900 79.700 137.900l1.800 2.100a32.120 32.120 0 0035.100 9.500l81.900-29.100c29.800 24.500 63.100 43.900 99 57.400l15.800 85.400a32.050 32.050 0 0025.800 25.700l2.700.5a449.400 449.400 0 00159 0l2.700-.5a32.050 32.050 0 0025.800-25.700l15.700-85a350 350 0 0099.700-57.600l81.300 28.900a32 32 0 0035.100-9.500l1.800-2.100c34.800-41.100 61.600-87.500 79.700-137.900l.9-2.600c4.500-12.300.8-26.300-9.300-35zM788.300 465.900c2.500 15.100 3.800 30.600 3.800 46.100s-1.300 31-3.800 46.100l-6.600 40.100 74.700 63.900a370.030 370.030 0 01-42.600 73.600L721 702.800l-31.400 25.800c-23.900 19.600-50.500 35-79.300 45.800l-38.100 14.300-17.900 97a377.500 377.500 0 01-85 0l-17.900-97.200-37.800-14.500c-28.500-10.800-55-26.200-78.700-45.700l-31.400-25.900-93.400 33.200c-17-22.900-31.200-47.600-42.600-73.600l75.500-64.500-6.500-40c-2.400-14.900-3.700-30.300-3.700-45.500 0-15.300 1.200-30.600 3.700-45.500l6.500-40-75.500-64.500c11.300-26.100 25.600-50.700 42.600-73.600l93.400 33.200 31.400-25.900c23.700-19.500 50.200-34.900 78.700-45.700l37.900-14.300 17.900-97.200c28.100-3.200 56.800-3.200 85 0l17.900 97 38.100 14.300c28.700 10.800 55.400 26.200 79.300 45.800l31.400 25.800 92.800-32.900c17 22.900 31.200 47.600 42.600 73.600L781.800 426l6.500 39.900zM512 326c-97.200 0-176 78.800-176 176s78.800 176 176 176 176-78.800 176-176-78.800-176-176-176zm79.200 255.200A111.600 111.600 0 01512 614c-29.900 0-58-11.700-79.200-32.800A111.600 111.600 0 01400 502c0-29.900 11.700-58 32.800-79.200C454 401.600 482.100 390 512 390c29.900 0 58 11.600 79.200 32.800A111.600 111.600 0 01624 502c0 29.900-11.700 58-32.800 79.200z"/></svg></div>

<div class="abs" style="left:0;top:0;width:6px;height:948px;background:linear-gradient(to right,rgba(0,21,41,.03),rgba(0,21,41,0));"></div>
</body>
</html>
